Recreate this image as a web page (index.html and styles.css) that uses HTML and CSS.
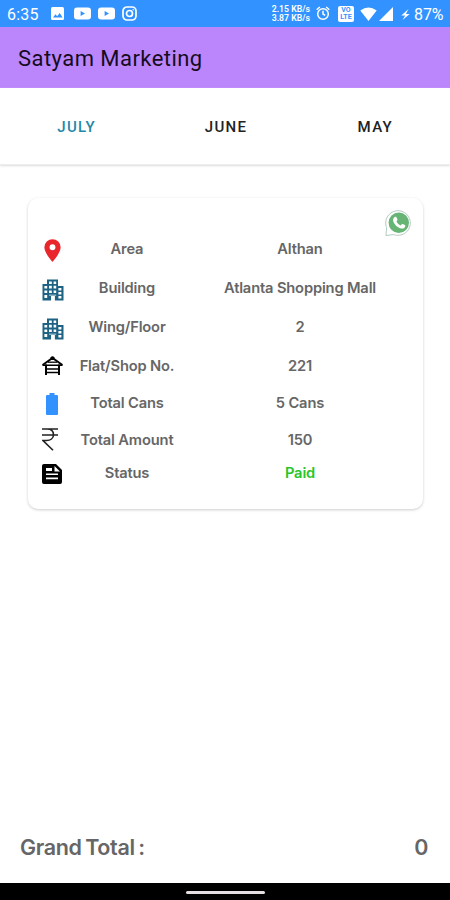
FILE: index.html
```html
<!DOCTYPE html>
<html lang="en">
<head>
<meta charset="utf-8">
<title>Satyam Marketing</title>
<link rel="stylesheet" href="styles.css">
</head>
<body>
<svg class="defs" aria-hidden="true">
  <symbol id="city" viewBox="0 0 22 22">
    <path fill="#1d6283" d="M5 0.5h11v6.5h5.5v14.5h-21V5H5z"/>
    <path fill="#fff" d="M7 2.5h2.8v2.6H7zM11.6 2.5h2.6v2.6h-2.6zM7 6.8h2.8v2.8H7zM11.6 6.8h2.6v2.8h-2.6zM2.4 7h2.8v2.6H2.4zM2.4 11.4h2.8V14H2.4zM7 11.4h2.8V14H7zM11.6 11.4h2.6V14h-2.6zM16.4 8.9h3v2.7h-3zM16.4 13h3v2.4h-3zM2.4 16h2.8v3H2.4zM16.4 17h3v2.5h-3zM9 17h3.9v5H9zM7 15.7h7.2v.8H7z"/>
  </symbol>
  <symbol id="video" viewBox="0 0 17 13">
    <rect y=".5" width="17" height="12" rx="3" fill="#fff"/><path fill="#3292ff" d="M6.6 4v5L11 6.5z"/>
  </symbol>
</svg>
<header class="status">
  <span class="clock">6:35</span>
  <svg class="s-img" viewBox="0 0 13 13"><rect width="13" height="13" rx="1.5" fill="#fff"/><path fill="#3292ff" d="M2 10.6l2.5-3.4 1.7 2 2.5-3.3 2.9 4.7z"/></svg>
  <svg class="s-video"><use href="#video"/></svg>
  <svg class="s-video"><use href="#video"/></svg>
  <svg class="s-cam" viewBox="0 0 15 15" fill="none" stroke="#fff" stroke-width="1.7"><rect x="1" y="1" width="13" height="13" rx="4"/><circle cx="7.5" cy="7.5" r="3"/><circle cx="11.2" cy="3.8" r=".4" stroke-width="1"/></svg>
  <span class="speed"><span>2.15 KB/s</span><span>3.87 KB/s</span></span>
  <svg class="s-alarm" viewBox="0 0 14 15" fill="none" stroke="#fff" stroke-width="1.5"><circle cx="7" cy="8" r="5.3"/><path d="M.7 3.7L3.8 1M13.3 3.7L10.2 1M7 4.8V8l2.2 1.4"/></svg>
  <span class="volte"><span>VO</span><span>LTE</span></span>
  <svg class="s-wifi" viewBox="0 0 17 14"><path fill="#fff" d="M8.5 14L.3 3.6Q8.5-2.8 16.700 3.600z"/></svg>
  <svg class="s-signal" viewBox="0 0 14 14"><path fill="#fff" d="M14 0v14H0z"/></svg>
  <svg class="s-bolt" viewBox="0 0 9 13"><path fill="#fff" d="M7.500 1L.3 7.600H4.200L1.500 12 8.700 5.900H4.900z"/></svg>
  <span class="percent">87%</span>
</header>
<div class="appbar"><h1>Satyam Marketing</h1></div>
<nav class="tabs"><span class="active">JULY</span><span>JUNE</span><span>MAY</span></nav>
<main>
  <section class="card">
    <div class="top">
      <svg class="whatsapp" viewBox="0 0 28 28"><path fill="#fff" stroke="#9dbcae" stroke-width=".8" d="M1 27l.7-8A12.800 12.800 0 1 1 9 26z"/><circle cx="14.300" cy="13.800" r="10.600" fill="#66b574"/><path fill="#fff" d="M10 7.800c.8-.6 1.700-.4 2 .4l.9 2.200c.3.700-.8 1.700-1 2.100.8 1.800 2.300 3.200 4.300 4 .7-.4 1.400-1.700 2.100-1.500l2.400 1.200c.8.500.2 2.100-.5 2.700-1.800 1.500-4.500.8-6.600-.5-2.600-1.600-4.800-4.200-5.200-6.700-.2-1.600.6-3.200 1.600-3.900z"/></svg>
    </div>
    <div class="row">
      <svg class="pin" viewBox="0 0 18 24"><path fill="#e9262b" fill-rule="evenodd" d="M9 0a8.600 8.600 0 0 0-8.600 8.600C.4 15 9 24 9 24s8.600-9 8.600-15.400A8.600 8.600 0 0 0 9 0zm0 5.500a3.100 3.100 0 1 1 0 6.200 3.100 3.100 0 0 1 0-6.200z"/></svg>
      <span>Area</span><span>Althan</span></div>
    <div class="row"><svg class="city"><use href="#city"/></svg><span>Building</span><span>Atlanta Shopping Mall</span></div>
    <div class="row"><svg class="city"><use href="#city"/></svg><span>Wing/Floor</span><span>2</span></div>
    <div class="row">
      <svg class="house" viewBox="0 0 21 20" fill="none" stroke="#000"><path stroke-width="1.900" d="M.6 9L10.500 2l9.900 7"/><path stroke-width="1.500" d="M.5 9.200h20M4 13h13M4 16.500h13"/><path stroke-width="2" d="M4 8.500V19M17 8.500V19"/><path stroke-width="1.300" d="M6 6.200h9"/><path fill="#000" stroke="none" d="M8.500 1.500q2-2.500 4 0V4h-4z"/></svg>
      <span>Flat/Shop No.</span><span>221</span></div>
    <div class="row short">
      <svg class="can" viewBox="0 0 12 22"><path fill="#3292ff" d="M3.500 0h5v2H11q1 0 1 1v18q0 1-1 1H1q-1 0-1-1V3q0-1 1-1h2.500z"/></svg>
      <span>Total Cans</span><span>5 Cans</span></div>
    <div class="row shorter">
      <svg class="rupee" viewBox="0 0 16 23" fill="none" stroke="#222" stroke-width="1.600"><path d="M0 1h16M0 7h16M2 1h3c4.500 0 6.500 2.600 6.500 5.700 0 3.500-3 5.800-7 5.800H1l10 9.800"/></svg>
      <span>Total Amount</span><span>150</span></div>
    <div class="row last">
      <svg class="note" viewBox="0 0 20 20"><path fill="#000" d="M2 0h12l6 6v12q0 2-2 2H2q-2 0-2-2V2Q0 0 2 0z"/><path fill="#fff" d="M4 4h6v3H4zM4 9.500h12v1.600H4zM4 13.500h12v1.700H4zM12.500 2l5.500 5.500h-5.500z"/></svg>
      <span>Status</span><span class="paid">Paid</span></div>
  </section>
</main>
<footer class="total"><span>Grand Total :</span><span>0</span></footer>
<div class="navbar"><i></i></div>
</body>
</html>
```
FILE: styles.css
```css
* { box-sizing: border-box; }
body {
  margin: 0;
  width: 450px;
  height: 900px;
  display: flex;
  flex-direction: column;
  overflow: hidden;
  background: #fff;
  font-family: Inter, sans-serif;
  color: #666;
}
svg { display: block; flex: none; }
.defs { display: none; }
.status {
  height: 27px;
  flex: none;
  display: flex;
  align-items: center;
  padding-left: 7px;
  background: #3292ff;
  color: #fff;
  font-family: Roboto, sans-serif;
}
.clock { width: 44px; font-size: 16px; letter-spacing: .2px; padding-top: 1px; }
.s-img { width: 13px; height: 13px; margin-right: 10px; }
.s-video { width: 17px; height: 13px; margin-right: 7px; }
.s-cam { width: 15px; height: 15px; }
.speed {
  display: flex;
  flex-direction: column;
  align-items: flex-end;
  width: 40px;
  margin-left: 133px;
  font-size: 8.700px;
  line-height: 9px;
  font-weight: 600;
  white-space: nowrap;
}
.s-alarm { width: 14px; height: 15px; margin-left: 6px; }
.volte {
  width: 16px;
  height: 16px;
  margin-left: 8px;
  border-radius: 2px;
  background: #fff;
  color: #3292ff;
  font-size: 7px;
  font-weight: 700;
  line-height: 7px;
  padding-top: 1px;
  text-align: center;
}
.volte span { display: block; }
.s-wifi { width: 17px; height: 14px; margin-left: 6px; }
.s-signal { width: 14px; height: 14px; margin-left: 2px; }
.s-bolt { width: 9px; height: 13px; margin-left: 8px; margin-top: 2px; }
.percent { margin-left: 4px; font-size: 16px; letter-spacing: -.1px; padding-top: 1px; }
.appbar {
  height: 61px;
  flex: none;
  display: flex;
  align-items: center;
  padding: 2px 0 0 18px;
  background: #bb86fc;
}
h1 {
  margin: 0;
  font: 450 22px Roboto, sans-serif;
  letter-spacing: .45px;
  color: #160b20;
}
.tabs {
  height: 77px;
  flex: none;
  display: grid;
  grid-template-columns: repeat(3, 1fr);
  align-items: center;
  text-align: center;
  padding: 2px 0 0 2px;
  border-bottom: 1px solid #ededed;
  box-shadow: 0 1px 2px #ddd;
  font: 500 15px Roboto, sans-serif;
  letter-spacing: 1.300px;
  color: #222;
}
.tabs .active { color: #2488a9; }
main { flex: 1; padding: 33px 27px 0 28px; }
.card {
  height: 311px;
  border-radius: 10px;
  box-shadow: 0 1px 3px rgba(0, 0, 0, .2);
  padding: 11px 12px 0;
}
.top { height: 19px; display: flex; justify-content: flex-end; }
.whatsapp { width: 27px; height: 28px; margin-right: -1px; }
.row {
  height: 39px;
  display: grid;
  grid-template-columns: 25px 124px 222px;
  align-items: center;
  justify-items: center;
  font-size: 14.700px;
  letter-spacing: -.16px;
  font-weight: 600;
}
.row span { padding-top: 2px; }
.row.short { height: 37px; }
.row.shorter { height: 36px; }
.row.short span, .row.shorter span { padding-top: 1px; }
.row.last { height: 32px; }
.row.last span { padding: 0 0 1px; }
.paid { color: #27c52a; }
.pin { width: 17px; height: 23px; margin-top: 5px; }
.city { width: 22px; height: 22px; margin-top: 6px; }
.house { width: 21px; height: 20px; margin: 3px 1px 0 0; }
.can { width: 12px; height: 22px; margin: 3px 2px 0 0; }
.rupee { width: 16px; height: 23px; margin-right: 5px; }
.note { width: 20px; height: 20px; margin: 2px 1px 0 0; }
.total {
  flex: none;
  height: 70px;
  display: flex;
  justify-content: space-between;
  align-items: center;
  padding: 0 22px 2px 20px;
  font-size: 21.500px;
  letter-spacing: -.35px;
  word-spacing: -1.500px;
  font-weight: 600;
}
.navbar {
  flex: none;
  height: 17px;
  background: #000;
  display: flex;
  justify-content: center;
  padding-top: 8px;
}
.navbar i { width: 79px; height: 3px; border-radius: 2px; background: #e5dfe3; }
```
